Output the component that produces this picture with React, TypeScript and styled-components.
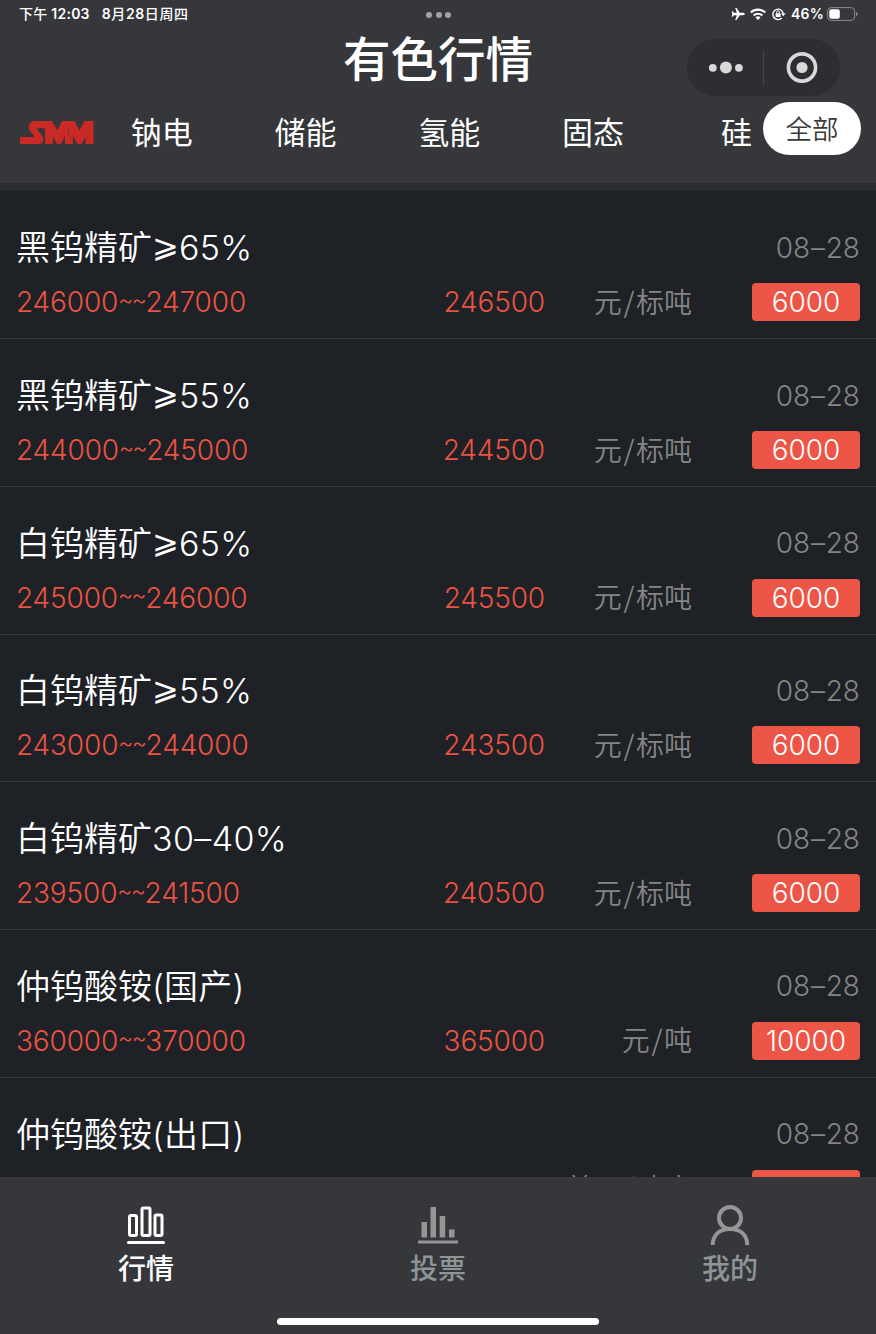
import React from 'react';
import styled, { createGlobalStyle } from 'styled-components';

const GlobalStyle = createGlobalStyle`
  * { box-sizing: border-box; }
  body {
    margin: 0;
    background: #1e2125;
    font-family: Inter, "Noto Sans CJK SC", sans-serif;
    color: #fff;
  }
`;

const Screen = styled.div`
  position: relative;
  width: 876px;
  height: 1334px;
  display: flex;
  flex-direction: column;
  overflow: hidden;
`;

const Header = styled.header`
  position: relative;
  height: 190px;
  flex: none;
  background: #35373b;
  border-bottom: 7px solid #2c2d31;
`;

const StatusBar = styled.div`
  height: 30px;
  padding: 0 18px 0 19px;
  display: grid;
  grid-template-columns: 1fr auto 1fr;
  align-items: center;
  font-size: 14px;
  font-weight: 600;
  line-height: 26px;
`;

const StatusTime = styled.div`
  display: flex;
  gap: 12px;
  height: 30px;
  white-space: pre;
`;

const StatusText = styled.span<{ $spacing: number }>`
  letter-spacing: ${(p) => p.$spacing}px;
`;

const StatusCjk = styled.span`
  font-family: "Noto Sans CJK SC", sans-serif;
  font-weight: 500;
`;

const Dots = styled.div`
  display: flex;
  gap: 3.5px;
  i {
    width: 6px;
    height: 6px;
    border-radius: 50%;
    background: #a1a2a5;
  }
`;

const StatusRight = styled.div`
  display: flex;
  justify-content: flex-end;
  align-items: center;
  padding-bottom: 2px;
  svg { display: block; }
`;

const Percent = styled.span`
  margin: 0 3px 0 5px;
  letter-spacing: 0.2px;
`;

const Title = styled.h1`
  margin: 0;
  height: 60px;
  line-height: 54px;
  text-align: center;
  font-family: "Noto Sans CJK SC", sans-serif;
  font-size: 47.5px;
  font-weight: 500;
`;

const Capsule = styled.div`
  position: absolute;
  left: 687px;
  top: 39px;
  width: 153px;
  height: 57px;
  border-radius: 29px;
  background: #2c2e32;
`;

const Nav = styled.nav`
  height: 84px;
  display: flex;
  padding-left: 20px;
`;

const Logo = styled.svg`
  width: 74px;
  height: 24px;
  margin-top: 30px;
  flex: none;
`;

const NavItems = styled.div`
  display: flex;
  flex: none;
  width: 665px;
  margin-left: -4px;
  overflow: hidden;
`;

const NavItem = styled.div`
  width: 143.7px;
  flex: none;
  text-align: center;
  font-family: "Noto Sans CJK SC", sans-serif;
  font-size: 31px;
  font-weight: 400;
  line-height: 81px;
`;

const AllButton = styled.button`
  margin: 12px 0 0 8px;
  width: 98px;
  height: 53px;
  flex: none;
  padding: 0 0 2px;
  border: 0;
  border-radius: 27px;
  background: #fff;
  color: #3b3a37;
  font-family: "Noto Sans CJK SC", sans-serif;
  font-size: 26.5px;
  font-weight: 350;
  line-height: 51px;
`;

const List = styled.main`
  flex: 1;
  min-height: 0;
  overflow: hidden;
  padding-top: 1.6px;
`;

const Row = styled.section`
  height: 147.7px;
  padding: 33.8px 16px 0;
  border-bottom: 1px solid #34363a;
  font-weight: 330;
`;

const RowLine = styled.div<{ $gap?: number }>`
  display: flex;
  align-items: center;
  height: ${(p) => (p.$gap ? 38 : 46)}px;
  margin-top: ${(p) => p.$gap ?? 0}px;
`;

const Name = styled.div`
  flex: 1;
  font-size: 34px;
  font-weight: 350;
  line-height: 46px;
  white-space: nowrap;
`;

const Latin = styled.span`
  font-weight: 320;
  letter-spacing: 0.35px;
`;

const Brackets = styled.span`
  letter-spacing: 0.2px;
`;

const AtLeast = styled.span`
  position: relative;
  top: -3px;
  font-family: "DejaVu Sans", sans-serif;
  font-size: 32px;
  font-weight: 200;
  line-height: 1;
  letter-spacing: 0;
`;

const DateText = styled.div`
  margin-top: -1px;
  color: #858585;
  font-size: 28px;
  line-height: 46px;
`;

const Dash = styled.span`
  padding: 0 0.8px;
`;

const Range = styled.div`
  width: 384px;
  color: #eb5344;
  font-size: 28px;
  line-height: 38px;
  letter-spacing: -0.15px;
`;

const Tilde = styled.span`
  position: relative;
  top: -3px;
  font-size: 23px;
  line-height: 1;
  letter-spacing: -1.4px;
  vertical-align: 1.5px;
`;

const Average = styled(Range)`
  width: 145px;
  text-align: right;
`;

const Unit = styled.div`
  width: 147px;
  margin-top: -3px;
  text-align: right;
  color: #858585;
  font-family: "Noto Sans CJK SC", sans-serif;
  font-size: 28px;
  font-weight: 350;
  line-height: 38px;
  white-space: nowrap;
`;

const Slash = styled.span`
  padding: 0 1.6px;
`;

const Change = styled.div`
  width: 108px;
  height: 38px;
  margin-left: auto;
  border-radius: 4px;
  background: #ed5546;
  text-align: center;
  font-size: 28px;
  font-weight: 340;
  line-height: 38px;
`;

const TabBar = styled.footer`
  position: relative;
  height: 157px;
  flex: none;
  display: grid;
  grid-template-columns: repeat(3, 1fr);
  background: #35373b;
`;

const Tab = styled.div<{ $active?: boolean }>`
  display: flex;
  flex-direction: column;
  align-items: center;
  padding-top: 26px;
  color: ${(p) => (p.$active ? '#fff' : '#8f9496')};
  font-family: "Noto Sans CJK SC", sans-serif;
  font-size: 28px;
  font-weight: 500;
  line-height: 40px;
  svg { display: block; margin-bottom: 2px; }
`;

const HomeIndicator = styled.div`
  position: absolute;
  left: 277px;
  bottom: 9px;
  width: 322px;
  height: 7px;
  border-radius: 4px;
  background: #fff;
`;

const navItems = ['钠电', '储能', '氢能', '固态', '硅'];

const rows = [
  { cjk: '黑钨精矿', min: '65%', range: ['246000', '247000'], avg: '246500', unit: ['元', '标吨'], change: '6000' },
  { cjk: '黑钨精矿', min: '55%', range: ['244000', '245000'], avg: '244500', unit: ['元', '标吨'], change: '6000' },
  { cjk: '白钨精矿', min: '65%', range: ['245000', '246000'], avg: '245500', unit: ['元', '标吨'], change: '6000' },
  { cjk: '白钨精矿', min: '55%', range: ['243000', '244000'], avg: '243500', unit: ['元', '标吨'], change: '6000' },
  { cjk: '白钨精矿', grade: '30–40%', range: ['239500', '241500'], avg: '240500', unit: ['元', '标吨'], change: '6000' },
  { cjk: '仲钨酸铵', market: '国产', range: ['360000', '370000'], avg: '365000', unit: ['元', '吨'], change: '10000' },
  { cjk: '仲钨酸铵', market: '出口', unit: ['美元', '吨度'] },
];

const MarketIcon = () => (
  <svg width="40" height="42" viewBox="0 0 40 42" fill="none" stroke="#fff" strokeWidth="3">
    <rect x="3.5" y="12.5" width="7" height="20" rx="1.5" />
    <rect x="16" y="5" width="8" height="27.5" rx="1.5" />
    <rect x="29" y="12" width="7" height="20.5" rx="1.5" />
    <path d="M2.5 39.5h35" strokeLinecap="round" />
  </svg>
);

const VoteIcon = () => (
  <svg width="40" height="42" viewBox="0 0 40 42" fill="#969696">
    <path d="M3.5 19H9v15.500H3.500zM12.500 4H18v30.500h-5.500zM21.700 13h5.500v21.500h-5.500zM31 26.500h5.500v8H31zM0 37.500h40v3H0z" />
  </svg>
);

const MineIcon = () => (
  <svg width="40" height="42" viewBox="0 0 40 42" fill="none" stroke="#969696" strokeWidth="4">
    <circle cx="20" cy="15" r="11" />
    <path d="M2.700 42C3 31.500 10 26 20 26s17 5.500 17.300 16" />
  </svg>
);

export default function App() {
  return (
    <>
      <GlobalStyle />
      <Screen>
        <Header>
          <StatusBar>
            <StatusTime>
              <StatusText $spacing={0.25}><StatusCjk>下午</StatusCjk> 12:03</StatusText>
              <StatusText $spacing={0.6}>8<StatusCjk>月</StatusCjk>28<StatusCjk>日周四</StatusCjk></StatusText>
            </StatusTime>
            <Dots><i /><i /><i /></Dots>
            <StatusRight>
              <svg width="14" height="14" viewBox="0 0 14 14" fill="#fff">
                <path d="M13.800 7c0 .8-1 1.200-2 1.200H8.800L5.600 13H4.200l1.600-4.800H3L1.700 9.800H.6L1.300 7 .6 4.200h1.100L3 5.800h2.800L4.200 1h1.400l3.200 4.800h3c1 0 2 .4 2 1.200z" />
              </svg>
              <svg width="16" height="12" viewBox="0 0 16 12" fill="none" stroke="#fff" strokeWidth="2.100" style={{ marginLeft: 5 }}>
                <path d="M.8 4.600a10.200 10.200 0 0 1 14.400 0M3.600 7.500a6.300 6.300 0 0 1 8.800 0" />
                <path d="M8 12 5.500 9.500a3.600 3.600 0 0 1 5 0z" fill="#fff" stroke="none" />
              </svg>
              <svg width="15" height="14" viewBox="0 0 15 14" fill="none" stroke="#fff" strokeWidth="1.400" style={{ marginLeft: 5 }}>
                <path d="M10.800 11A5.200 5.200 0 1 1 12.200 6.500" />
                <path d="M10 6.300h4.600L12.300 9.300z" fill="#fff" stroke="none" />
                <rect x="4.600" y="6.200" width="5" height="3.800" rx=".6" fill="#fff" stroke="none" />
                <path d="M5.700 6.500V5.300a1.400 1.400 0 0 1 2.800 0v1.200" strokeWidth="1" />
              </svg>
              <Percent>46%</Percent>
              <svg width="31" height="14" viewBox="0 0 31 14">
                <rect x=".6" y=".6" width="27" height="12.800" rx="3.500" fill="none" stroke="#8a8b8e" />
                <rect x="2.300" y="2.300" width="10.500" height="9.400" rx="2" fill="#fff" />
                <path d="M29 4.800c2.200.8 2.200 3.600 0 4.400z" fill="#8a8b8e" />
              </svg>
            </StatusRight>
          </StatusBar>
          <Title>有色行情</Title>
          <Nav>
            <Logo viewBox="0 0 74 24" fill="#c92a25">
              <path d="M0 24V17H12.500Q15 17 13.500 15.200L10 11Q7.500 7 9.500 4 11.500 1 15 1H32L37.500 10.500 42 1H54.500L59.500 10.500 64.500 1H73.500V24H65.500V17L61.500 24H57.500L53 16V24H45V16L41 24H37L33 16.500V24H25V8.500L17.500 8Q17 9.500 18.500 11L22 15.500Q25 20 22 23 20.500 24 18 24Z" />
              <path d="M48.500 8v8" stroke="#6e302f" strokeWidth=".8" />
            </Logo>
            <NavItems>
              {navItems.map((n) => <NavItem key={n}>{n}</NavItem>)}
            </NavItems>
            <AllButton>全部</AllButton>
          </Nav>
          <Capsule>
            <svg width="153" height="57" viewBox="0 0 153 57" fill="#d8d8d9">
              <circle cx="25.800" cy="28.800" r="3.900" />
              <circle cx="38.900" cy="28.500" r="6" />
              <circle cx="51.900" cy="28.800" r="3.900" />
              <path d="M76.500 11v36" stroke="#434549" strokeWidth="1.300" />
              <circle cx="115" cy="28.500" r="13.600" fill="none" stroke="#d8d8d9" strokeWidth="3.600" />
              <circle cx="115" cy="28.500" r="5.600" />
            </svg>
          </Capsule>
        </Header>
        <List>
          {rows.map((r, i) => (
            <Row key={i}>
              <RowLine>
                <Name>
                  {r.cjk}
                  {r.min && <Latin><AtLeast>⩾</AtLeast>{r.min}</Latin>}
                  {r.grade && <Latin>{r.grade}</Latin>}
                  {r.market && <Brackets>({r.market})</Brackets>}
                </Name>
                <DateText>08<Dash>–</Dash>28</DateText>
              </RowLine>
              <RowLine $gap={12}>
                <Range>{r.range && <>{r.range[0]}<Tilde>~~</Tilde>{r.range[1]}</>}</Range>
                <Average>{r.avg}</Average>
                <Unit>{r.unit[0]}<Slash>/</Slash>{r.unit[1]}</Unit>
                <Change>{r.change}</Change>
              </RowLine>
            </Row>
          ))}
        </List>
        <TabBar>
          <Tab $active><MarketIcon />行情</Tab>
          <Tab><VoteIcon />投票</Tab>
          <Tab><MineIcon />我的</Tab>
          <HomeIndicator />
        </TabBar>
      </Screen>
    </>
  );
}
